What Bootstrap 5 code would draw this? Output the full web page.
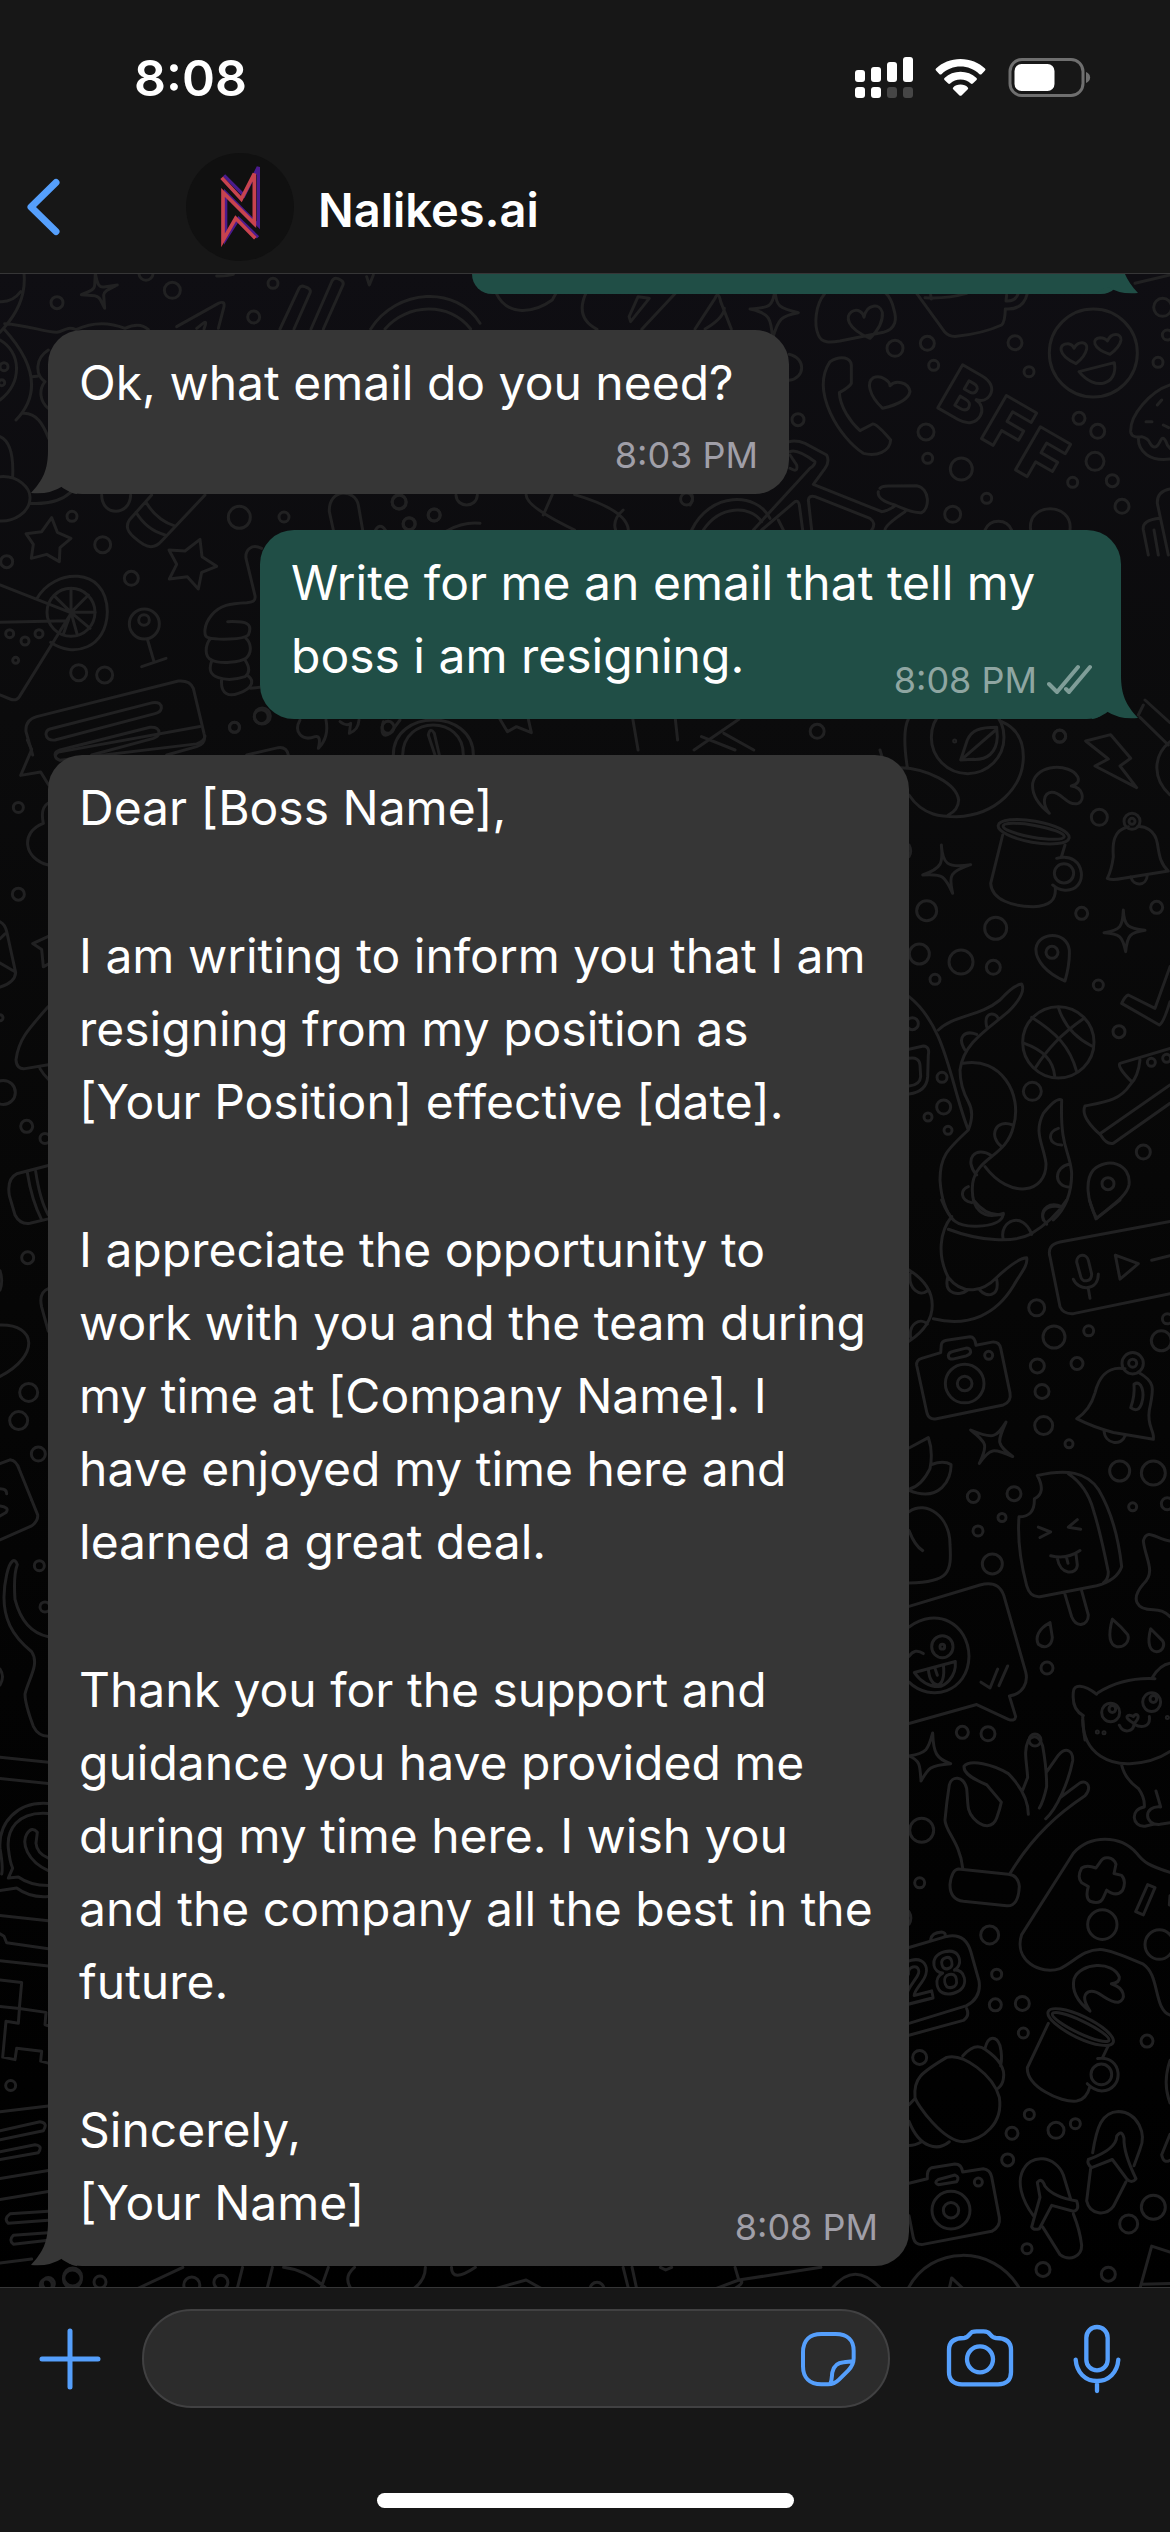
<!DOCTYPE html>
<html lang="en">
<head>
<meta charset="utf-8">
<meta name="viewport" content="width=device-width, initial-scale=1">
<title>Nalikes.ai</title>
<link href="https://cdn.jsdelivr.net/npm/bootstrap@5.3.0/dist/css/bootstrap.min.css" rel="stylesheet">
<style>
  :root { --bar: #171717; --line: #363637; --blue: #559ffc; --in: #363636; --out: #204e46; }
  body { background: var(--bar); color: #fff; font-family: Inter, "Liberation Sans", sans-serif; }
  svg { display: block; flex: none; }
  .status-row { padding: 40px 79px 24px 134px; }
  .clock { font-size: 50px; line-height: 76px; font-weight: 600; }
  .top-bar { border-bottom: 1px solid var(--line); }
  .nav-row { height: 133px; padding-left: 25px; }
  .contact { gap: 24px; margin-left: 125px; color: #fff; }
  .contact-name { font-size: 47px; line-height: 60px; font-weight: 600; padding-top: 6px; }
  .chat-area { background: linear-gradient(#0f0e13 0, #0b0b0c 22%, #070707 45%, #030303 70%, #000 100%); padding: 0 48px 21px; gap: 36px; }
  .wallpaper { position: absolute; inset: 0; width: 100%; height: 100%; fill: none; stroke: #212122; stroke-linecap: round; stroke-linejoin: round; }
  .wallpaper * { vector-effect: non-scaling-stroke; stroke-width: 3px; }
  .wallpaper .bff { font: 900 205px Inter, sans-serif; text-anchor: middle; }
  .wallpaper .digits { font: 700 170px "Liberation Mono", monospace; }
  .bubble { position: relative; background: var(--in); border-radius: 34px; padding: 16px 31px 17px; width: 861px; max-width: 100%; }
  .bubble p { font-size: 48px; line-height: 73px; margin: 0 0 75px; white-space: nowrap; }
  .bubble p:last-of-type { margin-bottom: 0; }
  .bubble-short { width: 741px; }
  .bubble-out { background: var(--out); margin-right: 1px; }
  .bubble-cut { height: 20px; width: 649px; padding: 0; border-radius: 0 0 34px 34px; }
  .tail { position: absolute; bottom: 0; left: -17px; fill: var(--in); }
  .bubble-out .tail { left: auto; right: -17px; fill: var(--out); transform: scaleX(-1); }
  .stamp { font-size: 36px; line-height: 44px; color: #a09fa8; margin-top: -34px; gap: 10px; }
  .bubble-short .stamp { margin-top: 14px; }
  .bubble-out .stamp { color: #8fa6a2; margin-right: -3px; }
  .bottom-bar { border-top: 1px solid var(--line); padding: 21px 48px 29px 38px; }
  .icon-btn { border: 0; padding: 0; background: none; color: var(--blue); flex: none; }
  .icon-btn svg, .back-link svg { fill: none; stroke: currentColor; stroke-linecap: round; stroke-linejoin: round; }
  .back-link { color: var(--blue); }
  .field-wrap { position: relative; margin: 0 55px 0 40px; }
  .message-field, .message-field:focus { height: 99px; border-radius: 50px; background: #2c2c2c; border: 2px solid #414142; color: #fff; font-size: 48px; padding: 0 110px 0 40px; box-shadow: none; }
  .sticker-btn { position: absolute; right: 32px; top: 21px; }
  .mic-btn { margin-left: 57px; }
  .home-bar { width: 417px; height: 15px; border-radius: 8px; background: #fff; }
</style>
<script src="https://cdn.jsdelivr.net/npm/bootstrap@5.3.0/dist/js/bootstrap.bundle.min.js"></script>
</head>
<body class="d-flex flex-column min-vh-100">

<header class="top-bar">
  <div class="status-row d-flex justify-content-between align-items-center">
    <span class="clock">8:08</span>
    <svg width="236" height="44" viewBox="856 56 236 44" aria-label="Signal, Wi-Fi, battery">
      <g fill="#fff">
        <rect x="856" y="70" width="10" height="12" rx="3"/><rect x="872" y="67" width="10" height="15" rx="3"/><rect x="888" y="62" width="10" height="20" rx="3"/><rect x="904" y="57" width="10" height="25" rx="3"/>
        <rect x="856" y="87" width="10" height="11" rx="3"/><rect x="872" y="87" width="10" height="11" rx="3"/>
        <g fill="#464646"><rect x="888" y="87" width="10" height="11" rx="3"/><rect x="904" y="87" width="10" height="11" rx="3"/></g>
        <path d="M961.500 59C971 59 980 62.600 986 68.600Q987 69.600 986 70.600L982.500 74.200Q981.500 75 980.500 74.200C975 69.200 968.500 66.600 961.500 66.600C954.500 66.600 948 69.200 942.500 74.200Q941.500 75 940.500 74.200L937 70.600Q936 69.600 937 68.600C943 62.600 952 59 961.500 59Z"/>
        <path d="M961.500 71.800C967.600 71.800 973 74 977.500 78Q978.500 79 977.500 80L973.800 83.600Q972.800 84.400 971.800 83.600C969 81 965.500 79.600 961.500 79.600C957.500 79.600 954 81 951.200 83.600Q950.200 84.400 949.200 83.600L945.500 80Q944.500 79 945.500 78C950 74 955.400 71.800 961.500 71.800Z"/>
        <path d="M961.500 84.600C964.500 84.600 967 85.600 968.800 87.400Q969.700 88.300 968.800 89.200L962.500 95.400Q961.500 96.300 960.500 95.400L954.200 89.200Q953.300 88.300 954.200 87.400C956 85.600 958.500 84.600 961.500 84.600Z"/>
        <rect x="1015.500" y="64" width="40" height="27" rx="7"/>
      </g>
      <rect x="1011" y="59.500" width="73" height="36" rx="12" fill="none" stroke="#6f6f6f" stroke-width="3"/>
      <path d="M1087 72C1092.500 74 1092.500 81 1087 83Z" fill="#6f6f6f"/>
    </svg>
  </div>
  <nav class="nav-row d-flex align-items-center">
    <a href="#" class="back-link" aria-label="Back"><svg width="36" height="60" viewBox="0 0 36 60" stroke-width="7"><path d="M31 5.500L6 30L31 54.500"/></svg></a>
    <a href="#" class="contact d-flex align-items-center text-decoration-none">
      <svg width="108" height="108" viewBox="48 38 324 324" aria-hidden="true">
        <circle cx="210" cy="200" r="162" fill="#101010"/>
        <path d="M162 105L222 165L265 80V255L167 157V296L206 235L264 291" fill="none" stroke="#4a1b8c" stroke-width="10"/>
        <path d="M155 112L214 176L253 100V250L159 156V300L197 234L256 294" fill="none" stroke="#c8434f" stroke-width="11"/>
      </svg>
      <span class="contact-name">Nalikes.ai</span>
    </a>
  </nav>
</header>

<main class="chat-area flex-grow-1 position-relative overflow-hidden d-flex flex-column">
  <svg class="wallpaper" id="wallpaper" viewBox="0 274 1170 2013" preserveAspectRatio="xMidYMin slice" aria-hidden="true">
    <!-- top left -->
    <g transform="translate(0 275) scale(.33333)">
      <path d="M70-20C82 50 55 110 12 158L0 172M0 80Q38 82 62 50M14 146C80 150 130 170 170 172C190 170 200 152 228 164Q300 130 375 160Q420 140 445 164"/>
      <path d="M286-6C292 30 298 38 312 36L352 30C325 44 312 48 311 60L314 100C300 72 298 64 284 62L244 59C270 48 284 44 284 30Z"/>
      <path d="M0 195C62 230 70 320 0 375M12 162C110 270 120 360 48 435M95 305L112 304M145 225C105 250 105 300 135 320C115 345 120 380 145 400M65 415C110 410 130 450 146 490M0 485C35 500 40 560 38 605M0 605C55 600 92 640 90 670C88 715 40 740 0 738M90 685Q170 690 212 652"/>
      <path d="M530 155L655 85Q675 76 672 95L655 160M590 160L608 146Q620 136 616 150L612 162"/>
      <path d="M840 162L897 40Q903 30 914 35L924 39Q935 45 929 56L882 162M933 162L996 18Q1002 6 1014 11L1022 15Q1033 21 1028 32L970 162M1112 162C1190 40 1370 30 1440 145M1155 162C1220 85 1350 80 1412 162M1100 5L1108 30L1120 0M650 3Q680 4 700-2"/>
      <path d="M455 660L388 735C372 760 388 780 430 808C450 820 470 815 485 798L615 660M438 682Q470 735 522 752M408 712Q440 765 495 780M305 660C305 725 390 725 392 660"/>
      <path d="M155 728L172 772L213 790L180 818L178 860L140 838L94 850L100 808L78 776L125 770Z M600 793L606 845L650 874L605 892L595 942L562 905L508 912L530 868L507 825L555 828Z"/>
      <path d="M1000 765L988 710C985 640 1065 640 1075 690L1088 765M1340 768Q1390 740 1440 745M1368 660C1370 700 1430 700 1432 660M1125 768Q1140 740 1158 768"/>
      <circle cx="213" cy="1012" r="72"/>
      <path d="M110 972C160 880 320 870 322 1010C320 1120 220 1150 152 1102M213 1012L285 1012M213 1012L265 960M213 1012L213 940M213 1012L162 962M213 1012L270 1060M213 1012L232 1080M213 1012L190 1078M0 930L210 1012M0 1042L205 1037M210 1020L60 1262Q50 1280 30 1272L0 1260"/>
      <circle cx="433" cy="1047" r="45"/><circle cx="432" cy="1035" r="16"/>
      <path d="M442 1092L462 1160M425 1175L498 1150"/>
      <path d="M785 820C755 805 735 825 738 850L765 962C768 980 755 982 740 983C690 985 660 990 635 1020C610 1050 610 1085 625 1088C650 1095 730 1095 745 1080C760 1045 740 1038 683 1040M632 1090C615 1110 612 1145 635 1155C660 1168 720 1162 738 1150C760 1130 750 1100 738 1090M635 1158C625 1185 632 1200 655 1208C685 1218 720 1210 735 1205C755 1190 745 1170 735 1155M665 1212C660 1260 690 1265 715 1255C760 1240 765 1215 740 1200M752 1240L785 1236"/>
      <path d="M98 1440L78 1370Q75 1335 110 1325L535 1218Q570 1215 580 1240L612 1375Q620 1405 590 1415L500 1440M150 1362L458 1283Q485 1280 484 1300Q482 1312 465 1316L165 1395Q140 1398 138 1378Q138 1366 150 1362ZM165 1440Q165 1430 180 1425L450 1357Q478 1355 477 1375Q475 1385 460 1390L275 1440M740 1440L835 1418Q860 1415 865 1440"/>
      <path d="M900 1335C880 1370 905 1400 945 1385Q965 1380 955 1420C975 1400 985 1370 978 1335M1020 1340Q1040 1355 1052 1345L1048 1375Q1075 1365 1077 1335M1150 1340C1140 1375 1150 1390 1170 1375L1200 1335M1180 1440C1180 1300 1420 1300 1420 1440M1208 1440C1210 1320 1390 1320 1390 1440M1305 1440L1285 1380Q1290 1355 1303 1375L1318 1440"/>
    </g>
    <!-- top right -->
    <g transform="translate(690 275) scale(.33333)">
      <path d="M15 162L75 70Q85 45 92 80L124 162M45 162Q100 130 103 100"/>
      <path d="M255 45C258 95 268 100 325 113C275 122 265 130 248 190C243 130 240 115 180 102C240 98 248 95 255 45Z"/>
      <path d="M405 55C375 90 372 150 385 180C395 205 420 203 450 198L580 172C620 162 620 130 612 105Q605 70 585 52M540 190C470 160 465 125 485 110C505 98 520 115 522 127C530 85 570 85 577 112C580 140 565 165 540 190Z"/>
      <path d="M680 55L765 172Q778 186 800 184Q880 175 935 150Q945 140 946 102C985 105 1005 85 1012 55M705 68Q770 72 830 55M950 60L948 78C970 80 980 70 985 55M722 60L724 72"/>
      <circle cx="1210" cy="234" r="132"/>
      <path d="M1158 266C1100 240 1105 205 1135 206Q1148 208 1152 220C1165 195 1195 200 1190 222Q1185 245 1158 266ZM1260 238C1205 220 1205 190 1230 188Q1245 188 1252 198C1265 170 1295 175 1293 195Q1290 215 1260 238ZM1167 290L1273 263C1285 330 1215 350 1167 290Z"/>
      <path d="M420 260C455 238 482 250 484 270L484 325Q480 335 448 353C450 395 480 440 510 467L548 447Q560 445 602 495C600 530 560 545 520 535C450 490 360 350 420 260ZM578 400C535 360 530 320 550 308C575 298 600 320 600 332C615 315 655 320 660 350C655 375 620 390 578 400Z"/>
      <text class="bff" transform="translate(794 428) rotate(30)">B</text>
      <text class="bff" transform="translate(918 516) rotate(30)">F</text>
      <text class="bff" transform="translate(1020 610) rotate(30)">F</text>
      <path d="M1440 330C1380 350 1320 420 1322 470Q1325 490 1355 485Q1375 490 1380 505Q1395 530 1410 500Q1420 475 1432 510L1440 520M1345 490C1345 530 1380 560 1440 552M1402 390L1415 375M1368 440H1386M1420 450L1436 458"/>
      <path d="M297 500Q320 495 345 505L410 540Q420 560 405 580L370 628L575 710Q590 710 615 692M300 530Q320 520 375 560Q375 570 360 580L190 765M300 580Q325 595 320 570L300 540M215 765L315 680Q325 675 328 690L338 765M365 765L355 675Q357 660 375 665L540 730Q560 745 545 765M265 735L280 765M570 640Q575 632 600 633L680 632C720 640 720 700 695 713Q670 715 615 690Q560 675 565 650M585 765Q585 750 645 710"/>
      <path d="M5 765C60 650 200 650 240 730M40 765C90 690 180 690 215 740M885 765C900 730 950 730 965 765M1022 765C1010 680 1150 680 1140 765M1440 642Q1400 650 1402 685L1435 840M1410 730Q1355 735 1360 765L1375 840M1392 765L1405 840M1335 25L1440 0"/>
      <path d="M297 238C350 250 345 310 297 316M0 650Q15 670 0 690"/>
    </g>
    <!-- strips between the first bubbles -->
    <g transform="translate(0 270) scale(.74627 .33333)">
      <path d="M665 70C680 140 715 130 740 90L745 70M785 70C775 120 780 155 800 178M860 178L905 70M845 155L870 85L855 80L843 140ZM705 674Q705 710 770 780M740 674L728 735M770 674Q840 720 842 780M835 720Q820 750 825 780"/>
      <path d="M670 1348L680 1385L692 1370L712 1388L708 1348M848 1348L855 1440M905 1348L908 1410M930 1440L990 1348M940 1400L985 1440M970 1390L1010 1440"/>
    </g>
    <!-- right, upper -->
    <g transform="translate(880 700) scale(.33333)">
      <circle cx="263" cy="112" r="109"/>
      <path d="M85 57C68 90 74 150 82 203M62 203C140 205 230 250 236 300Q235 330 205 345M87 285C130 350 190 350 230 350C350 345 430 260 430 170C430 110 400 80 365 65M242 180L262 120C275 90 300 82 350 82L352 110C350 160 320 180 280 178ZM245 178L347 90"/>
      <path d="M617 123L692 104L752 175L720 198L770 263L645 198L685 177ZM508 340C470 310 455 280 458 250C470 190 570 190 593 230Q602 250 574 258C610 262 615 300 595 310C560 320 545 275 515 277C490 280 485 310 508 340Z"/>
      <ellipse cx="461" cy="395" rx="108" ry="32" transform="rotate(10 461 395)"/><ellipse cx="461" cy="394" rx="93" ry="18" transform="rotate(10 461 394)"/>
      <path d="M368 405L332 550C335 600 400 620 460 620C510 618 528 600 526 565M555 435L545 468M530 475C620 450 630 580 550 570Q535 570 518 555"/><circle cx="552" cy="520" r="29"/>
      <path d="M745 380C700 390 697 430 700 470Q695 510 682 535Q695 542 730 535L865 513C840 490 838 465 832 430C825 390 795 378 772 380M752 530C760 560 800 560 802 525"/>
      <path d="M184 435C188 490 200 505 272 494C210 515 205 525 218 580C195 530 190 520 128 525C185 505 190 490 184 435ZM730 630C732 680 745 685 795 691C750 698 742 705 737 755C728 710 720 700 672 698C722 690 728 680 730 630Z"/>
      <path d="M555 843C500 820 465 780 468 745C475 695 560 690 568 750Q570 790 555 843ZM650 1555C620 1500 615 1440 640 1410C680 1370 755 1390 747 1455C740 1490 690 1520 650 1555Z"/>
      <path d="M870 800L825 925L745 885Q735 888 725 910L838 975Q850 970 870 905M870 1045L720 1090Q710 1100 755 1145M780 1080Q775 1130 750 1155C720 1200 680 1205 615 1218Q600 1250 662 1305Q680 1335 700 1330L870 1210M662 1300L870 1155"/>
      <circle cx="535" cy="1027" r="107"/>
      <path d="M455 952C530 1000 570 1040 590 1115M535 922C550 970 580 1010 635 1038M612 955C540 1005 500 1050 465 1105M433 1030C490 1050 520 1080 524 1128"/>
      <path d="M87 890C200 980 210 1150 265 1290C200 1350 180 1370 180 1440Q185 1520 220 1560M175 990C220 945 300 950 360 900Q400 855 425 852C440 880 400 920 385 935C320 990 250 1030 240 1110Q240 1160 265 1205Q285 1240 265 1290M250 1090C360 1070 430 1180 400 1280C380 1370 290 1370 278 1450C270 1530 310 1560 370 1540M315 1400C390 1500 500 1480 498 1390C490 1330 460 1300 490 1240Q530 1190 545 1200C540 1350 570 1350 575 1420Q575 1510 520 1560M320 980C310 935 345 935 355 955M255 1050C230 1010 255 990 290 1003M365 1340C325 1310 345 1255 398 1275M290 1425C250 1380 285 1335 335 1367M265 1460C240 1470 240 1500 275 1508M535 1285C500 1295 505 1335 545 1335M570 1392C520 1400 520 1460 570 1462M490 1560C480 1525 510 1505 545 1520"/>
      <path d="M87 1048L130 1038Q150 1040 145 1065L143 1130Q140 1175 87 1182M87 1075Q118 1070 120 1095L122 1130Q120 1155 87 1158M795 0L870 68M790 15L775 45M780 52L865 135M870 125C815 170 820 240 870 285M0 150L6 170M87 435Q97 455 87 470"/>
    </g>
    <!-- right, middle -->
    <g transform="translate(880 1200) scale(.33333 .34439)">
      <path d="M185 0C210 60 230 78 290 76C330 75 365 65 370 42Q320 50 280 0M205 85C300 120 400 125 450 100Q520 60 560 0M370 115C355 60 430 30 455 100M500 70C475 45 490 10 545 20M215 48C180 90 170 160 205 225C250 280 310 265 350 225Q410 170 440 168C445 190 420 215 400 250C350 330 270 370 160 345M203 225C190 275 240 280 262 262M300 262C320 285 360 280 350 230M87 203C180 260 180 350 87 410M90 215C85 260 120 280 140 265M92 400C85 360 120 340 142 360M628 0L648 55L720 0"/>
      <path d="M870 62L540 122Q500 130 510 165L540 310Q550 332 580 330L870 272M590 180C590 155 620 155 625 175L635 215C635 240 605 240 602 222ZM580 230C595 265 655 265 655 215M625 258L630 285M706 160L775 185L720 230ZM815 175L870 162"/>
      <path d="M110 480Q108 465 125 460L182 443L184 420Q185 410 200 407L270 397Q285 397 288 422L340 412Q358 412 362 430L390 560Q395 585 370 595L170 635Q145 640 140 615ZM218 440L258 430Q272 430 272 442Q270 450 258 453L218 462Q205 462 205 452Q206 442 218 440Z"/>
      <ellipse cx="254" cy="533" rx="58" ry="56"/><ellipse cx="254" cy="533" rx="22" ry="21"/>
      <path d="M272 668C340 695 350 690 378 645C350 705 350 710 398 745C340 720 330 720 298 765C325 710 320 705 272 668ZM87 720L145 690Q160 730 150 780Q125 830 87 840M155 768Q190 755 213 768C215 810 180 880 87 843M87 905C140 870 210 920 210 1000C215 1080 210 1110 87 1112M87 960Q105 1005 128 1018"/>
      <path d="M735 490C680 480 655 520 645 560Q630 610 590 635Q640 660 700 675L820 695C825 670 800 660 808 610C820 550 830 530 775 500M762 535C785 520 795 560 785 590Q775 620 752 603Q765 570 762 535ZM672 670C675 710 725 715 735 685"/><ellipse cx="758" cy="474" rx="32" ry="31"/>
      <path d="M472 800C560 780 620 790 655 840Q710 930 725 1065Q710 1105 650 1120L480 1152Q450 1155 440 1120Q410 1010 417 920Q465 920 463 868Q500 850 472 800ZM565 795Q620 830 640 900Q660 960 685 1080Q685 1100 670 1112M555 1145L575 1210C590 1245 625 1235 625 1205L605 1135M475 950L512 964L480 980M592 928L565 950L602 956M512 1033Q560 1045 600 1018M532 1040C540 1090 590 1090 592 1060L588 1028M560 1040L564 1055"/>
      <path d="M510 1227C475 1245 465 1270 475 1290C495 1305 515 1295 517 1270ZM697 1217C685 1260 685 1290 710 1297C735 1300 750 1280 743 1262Q725 1240 697 1217ZM812 1245C800 1290 810 1310 830 1312C850 1310 855 1290 848 1280Z"/>
      <path d="M87 1180L300 1118C350 1105 365 1130 372 1150L437 1370C445 1400 430 1435 388 1440L407 1500Q405 1515 385 1508L290 1465L87 1520M303 1400L330 1417L353 1362M357 1410L383 1353"/>
      <path d="M87 1240C170 1180 265 1230 267 1325C265 1430 150 1460 87 1400M103 1372L226 1340C230 1390 190 1412 175 1413C140 1412 120 1395 103 1372ZM87 1325Q105 1300 130 1317M145 1362C150 1425 200 1425 190 1350M165 1360L172 1380"/><circle cx="187" cy="1297" r="32"/><circle cx="187" cy="1297" r="7"/>
      <path d="M870 990C830 985 800 950 790 990C795 1040 830 1080 790 1115C750 1160 770 1190 820 1190Q850 1190 870 1210M650 1435C610 1405 580 1405 580 1430Q575 1480 610 1497M655 1430Q730 1385 825 1390M818 1385Q840 1350 870 1345M608 1500Q610 1540 615 1568M718 1525C730 1550 760 1545 762 1522C785 1535 812 1530 808 1500M762 1520C725 1500 745 1490 760 1500C770 1485 785 1500 762 1520Z"/><circle cx="692" cy="1488" r="27"/><circle cx="697" cy="1478" r="10"/><circle cx="815" cy="1458" r="27"/><circle cx="820" cy="1449" r="10"/>
    </g>
    <!-- right, lower -->
    <g transform="translate(880 1720) scale(.33333 .36996)">
      <path d="M608 0C610 100 700 120 750 118Q820 115 870 85M725 122Q735 160 775 185Q795 210 793 235C750 240 755 290 795 287L820 282M828 192L842 235C790 230 790 285 840 282L870 278"/>
      <path d="M158 35C160 90 170 105 212 118C150 122 145 130 123 165C120 120 120 110 87 97C140 90 145 80 158 35Z"/>
      <path d="M248 400C240 330 195 300 195 270Q200 220 208 175C215 150 250 150 260 185C265 230 260 245 280 265C310 295 340 290 350 265Q360 240 364 222L320 175C280 160 250 145 252 125C270 105 340 120 385 145Q445 200 445 255M428 190L443 155C440 110 430 85 445 55C465 35 480 50 488 70Q500 130 500 180Q490 220 478 238M500 140L535 95C560 70 580 85 578 110C565 170 530 240 497 267M540 210L600 170C625 160 635 185 615 205C540 250 460 310 390 415"/>
      <path d="M235 403L385 417Q415 420 418 450Q415 505 380 502L250 490Q210 485 210 445Q215 405 235 403Z"/>
      <path d="M870 412C810 395 790 385 770 360C720 310 630 310 580 360L425 580C400 650 480 690 540 672C580 655 610 620 660 620Q690 620 790 660C840 690 820 780 870 798M660 385C670 365 700 370 708 390L702 415L725 420Q740 435 728 460Q710 480 680 460L670 480Q660 500 630 490Q615 480 625 450L605 440Q590 425 605 400Q620 390 648 400ZM803 445L825 453L790 527L767 518ZM870 475L868 500"/>
      <ellipse cx="667" cy="553" rx="44" ry="40"/><ellipse cx="838" cy="607" rx="43" ry="40"/>
      <path d="M87 615L200 585Q255 575 272 625L297 705Q305 750 260 772L87 820M152 593Q155 575 185 573Q198 575 195 583M260 780Q270 800 250 812L87 852"/>
      <text class="digits" x="70" y="772" transform="rotate(-13 70 772)">28</text>
      <path d="M105 1020C100 970 120 955 200 912C250 900 340 960 358 1020C370 1090 310 1135 250 1140C190 1140 110 1040 105 1020ZM248 908Q285 870 315 890Q380 930 370 970Q368 985 355 995M315 888C325 850 350 855 360 880Q368 910 362 935M103 1025L87 1040M87 1085C120 1160 175 1165 208 1140M87 1150Q105 1150 125 1140"/>
      <path d="M630 787C590 760 575 730 582 700C600 655 700 650 718 695Q720 710 694 713C735 725 740 755 715 763C680 765 655 725 625 735C605 745 615 765 630 787Z"/>
      <ellipse cx="602" cy="830" rx="106" ry="30" transform="rotate(23 602 830)"/><ellipse cx="602" cy="830" rx="92" ry="17" transform="rotate(23 602 830)"/>
      <path d="M505 820L442 940C440 990 540 1035 590 1030Q620 1025 630 990M685 880L668 912M653 915C730 905 735 1000 665 1003Q640 1000 622 983"/><ellipse cx="664" cy="958" rx="31" ry="28"/>
      <path d="M87 1252L142 1240Q140 1215 155 1210L225 1200Q245 1200 248 1222L310 1213Q330 1215 335 1235L358 1345Q362 1370 335 1382L125 1418Q105 1418 100 1400L87 1340M175 1242L225 1230Q240 1235 230 1248L175 1256Q160 1250 175 1242Z"/><ellipse cx="213" cy="1325" rx="57" ry="51"/><ellipse cx="213" cy="1325" rx="23" ry="21"/>
      <path d="M460 1340C420 1290 415 1250 425 1225C450 1165 530 1180 550 1230L572 1295M472 1250Q485 1235 495 1260Q520 1290 590 1300Q600 1325 580 1328L515 1312L478 1375Q460 1380 455 1370L480 1290ZM488 1370L540 1445C570 1465 605 1450 605 1420Q600 1380 580 1335M638 1170C650 1100 665 1060 715 1058C775 1060 800 1120 780 1160L762 1205M710 1125Q725 1105 732 1130Q730 1170 768 1240Q755 1255 740 1240L697 1188L635 1210Q620 1200 625 1188Q710 1160 710 1125ZM632 1212L620 1300C630 1340 680 1340 700 1315L738 1248"/>
      <path d="M85 1536C150 1420 340 1415 418 1536M208 1536L215 1508L248 1536M780 1536L815 1422L870 1438M785 1525L870 1523M870 920C855 960 855 1000 870 1035M870 1120L845 1175Q850 1200 870 1190M87 518Q98 535 87 552"/>
    </g>
    <!-- left margin, upper -->
    <g transform="translate(0 740) scale(.33333 .4847)">
      <path d="M82 0L95 20L62 73L122 66L145 92M175 25L600-28M180 42L590 8Q615 2 615-8M175 25Q155 35 180 42M145 130Q120 140 130 172C60 190 70 245 145 258M0 375Q15 380 20 395L47 480Q45 500 0 510M0 410L15 400M0 460L45 478M145 405L98 420L125 432L130 468L145 462M145 550C80 600 55 620 48 660Q50 680 75 678L145 670M120 678Q130 690 145 700M145 878L50 895Q20 905 28 940L45 980Q60 1000 90 997L145 988M82 893Q95 950 125 990M107 890Q120 950 145 980M145 1132Q115 1140 125 1170L145 1220M0 1095Q10 1115 0 1135M0 1207C110 1205 120 1270 0 1313M0 1493L30 1485Q50 1487 58 1505L95 1568M0 1545Q20 1545 20 1555"/>
    </g>
    <!-- left margin, lower -->
    <g transform="translate(0 1500) scale(.33333 .49745)">
      <path d="M95 0L113 30Q115 42 95 52L0 80M0 12Q30 15 18 25L0 32M52 130C45 115 30 120 20 150C-10 240 50 280 95 305C120 330 85 360 75 390Q75 410 100 455Q115 475 145 475M52 130Q40 150 45 200Q70 265 145 275M0 517L145 527M0 560L145 570M0 340Q15 355 0 372M145 610C50 605-5 650 0 700Q10 740 5 752M145 630C50 625 20 665 25 700Q30 730 38 740L25 760L55 758Q90 775 145 775M0 785L50 780Q90 800 145 797M145 745C80 725 65 690 80 672Q95 655 112 668L108 690Q110 710 145 720M0 835L145 846M0 872L12 877L20 890L145 902M0 926L145 937M0 965L65 970L58 1022L0 1018M58 1022L138 1030L135 1055L145 1057M58 1025L55 1052L18 1048L8 1120L45 1125L50 1102L125 1108L122 1128L145 1132M0 1230L145 1218M0 1268L120 1250Q145 1252 130 1268L0 1286M0 1310L105 1296Q130 1298 115 1312L0 1326M0 1364L145 1348M0 1406L145 1390M145 1430L30 1435Q10 1445 25 1454L145 1448M145 1473L40 1478Q25 1488 40 1496L145 1488M0 1534L95 1526"/>
    </g>
    <!-- strip over the message field -->
    <g transform="translate(0 2160) scale(.74627 .33333)">
      <path d="M185 385L245 322M318 385L325 322M365 322L358 385M380 322Q410 330 437 385M440 322L430 385M475 322Q460 350 470 385M570 322Q570 360 555 385M605 322Q605 370 637 322M665 385L705 360L725 385M835 322L842 385M847 322L853 385M885 322L892 330L900 322M985 322L990 360L1100 322M960 385L990 360Q1000 365 985 385M1115 385Q1145 300 1180 385"/>
    </g>
  </svg>

  <div class="bubble bubble-out bubble-cut align-self-end"><svg class="tail" width="46" height="20" viewBox="0 24 46 20"><path d="M17 0C17 20 12 30 0 43Q18 45 32 36Q38 43 46 44V0Z"/></svg></div>

  <div class="bubble bubble-short d-flex flex-column">
    <svg class="tail" width="46" height="44" viewBox="0 0 46 44"><path d="M17 0C17 20 12 30 0 43Q18 45 32 36Q38 43 46 44V0Z"/></svg>
    <p>Ok, what email do you need?</p>
    <div class="stamp d-flex justify-content-end">8:03 PM</div>
  </div>

  <div class="bubble bubble-out align-self-end d-flex flex-column">
    <svg class="tail" width="46" height="44" viewBox="0 0 46 44"><path d="M17 0C17 20 12 30 0 43Q18 45 32 36Q38 43 46 44V0Z"/></svg>
    <p>Write for me an email that tell my<br>boss i am resigning.</p>
    <div class="stamp d-flex justify-content-end align-items-center">8:08 PM
      <svg width="46" height="32" viewBox="0 0 46 32" fill="none" stroke="#7f9d98" stroke-width="4" stroke-linecap="round" stroke-linejoin="round"><path d="M2 20L10 28L31 3M22 28L43 3M19 25L22 28"/></svg>
    </div>
  </div>

  <div class="bubble d-flex flex-column">
    <svg class="tail" width="46" height="44" viewBox="0 0 46 44"><path d="M17 0C17 20 12 30 0 43Q18 45 32 36Q38 43 46 44V0Z"/></svg>
    <p>Dear [Boss Name],</p>
    <p>I am writing to inform you that I am<br>resigning from my position as<br>[Your Position] effective [date].</p>
    <p>I appreciate the opportunity to<br>work with you and the team during<br>my time at [Company Name]. I<br>have enjoyed my time here and<br>learned a great deal.</p>
    <p>Thank you for the support and<br>guidance you have provided me<br>during my time here. I wish you<br>and the company all the best in the<br>future.</p>
    <p>Sincerely,<br>[Your Name]</p>
    <div class="stamp d-flex justify-content-end">8:08 PM</div>
  </div>
</main>

<footer class="bottom-bar">
  <form class="d-flex align-items-center">
    <button type="button" class="icon-btn" aria-label="Attach"><svg width="64" height="64" viewBox="0 0 64 64" stroke-width="5"><path d="M32 4V60M4 32H60"/></svg></button>
    <div class="field-wrap flex-grow-1">
      <label for="message" class="visually-hidden">Message</label>
      <input id="message" type="text" class="message-field form-control">
      <button type="button" class="icon-btn sticker-btn" aria-label="Stickers"><svg width="58" height="58" viewBox="51 153 174 174" stroke-width="12"><path d="M135 316H115C80 316 60 296 60 262V220C60 182 82 165 115 165H158C195 165 212 185 212 215V238C212 256 206 264 196 274L168 302C158 312 150 316 135 316ZM142 314C148 300 146 290 148 280C152 262 164 251 182 250L209 247"/></svg></button>
    </div>
    <button type="button" class="icon-btn" aria-label="Camera"><svg width="70" height="70" viewBox="489 135 210 210" stroke-width="13"><path d="M570 159Q576 157 584 157H604Q612 157 618 160C626 165 628 176 642 177C672 177 687 190 687 213V280C687 303 673 316 648 316H540C515 316 501 303 501 280V213C501 190 516 177 546 177C560 176 562 164 570 159Z"/><circle cx="594" cy="241" r="39"/></svg></button>
    <button type="button" class="icon-btn mic-btn" aria-label="Record voice message"><svg width="50" height="72" viewBox="870 136 150 216" stroke-width="13"><rect x="913" y="148" width="64" height="130" rx="32"/><path d="M881 246C884 285 910 310 945 310S1006 285 1009 246M945 312V340"/></svg></button>
  </form>
</footer>
<div class="d-flex justify-content-center pb-4 pt-5"><div class="home-bar mt-2"></div></div>

<script>
  // Loose rings of the wallpaper: [offset x, offset y, scale x, scale y, "x y radius, ..."]
  const rings = [
    [0, 275, 3, 3, "171 83 6,517 46 8,438 -5 7,819 25 5,761 126 6,12 275 4,5 323 3,216 724 5,308 809 8,20 860 6,718 727 11,852 726 5,394 910 7,236 1193 8,314 1200 8,29 1076 4,75 1098 4,117 1076 4,47 1156 3,787 1323 8,704 1357 5,1197 680 7,1228 746 6,1302 720 6"],
    [690, 275, 3, 3, "615 220 8,712 205 7,975 203 7,731 271 5,1017 290 5,324 434 6,708 471 8,713 550 5,814 582 11,1167 430 6,1223 469 7,1215 559 9,1148 622 5,1267 617 6,1296 694 7,788 718 8,890 670 5,1418 97 9,1432 180 5,1404 262 5"],
    [880, 700, 3, 3, "539 109 6,224 123 1,658 352 8,756 364 8,756 364 3,140 632 10,347 685 11,605 640 6,830 622 6,118 762 10,243 786 12,340 802 7,165 838 5,516 757 6,655 855 5,97 971 6,717 995 6,186 1132 5,191 1221 7,144 1251 4,204 1291 4,457 1174 9,790 1356 7,684 1451 6,814 1087 4,860 1075 4"],
    [880, 1200, 3, 2.904, "470 313 8,522 398 11,626 380 5,862 345 5,844 409 10,472 482 7,591 475 6,486 556 7,491 655 9,567 708 4,326 451 4,758 474 4,719 787 10,820 793 12,758 891 4,862 882 6,280 861 6,402 853 7,366 922 4,294 961 5,337 1057 10,501 1359 6,247 1546 6,324 1550 7,465 1568 6,652 1545 1,672 1547 1,862 1503 1"],
    [880, 1720, 3, 2.703, "125 298 12,119 440 5,329 581 9,350 687 5,346 770 6,427 766 7,430 846 5,119 912 7,801 868 6,448 1066 5,396 1117 6,528 1109 8,586 1091 5,383 1189 6,295 1249 4,820 1317 12,746 1362 9,441 1429 5,489 1485 7,685 1498 7"],
    [0, 740, 3, 2.063, "55 139 5,55 318 6,10 727 12,80 797 6,135 822 5,83 1068 6,86 1346 9,56 1404 9,115 1473 7,0 573 3"],
    [0, 1500, 3, 2.0103, "118 132 5,135 215 5,32 1177 5,218 1562 9,145 1575 6"],
    [0, 270, 1.34, 3, "535 697 7,582 735 6,548 762 6,920 687 6,350 1340 7,314 1372 5,520 1372 6,1095 1384 7,1420 1398 6"],
    [0, 2160, 1.34, 3, "62 375 6,97 357 9,134 366 6,257 375 8,296 367 7,800 388 7"]
  ];
  const paper = document.getElementById("wallpaper");
  for (const [ox, oy, sx, sy, list] of rings) {
    for (const item of list.split(",")) {
      const [x, y, r] = item.split(" ").map(Number);
      const ring = document.createElementNS("http://www.w3.org/2000/svg", "circle");
      ring.setAttribute("cx", ox + x / sx);
      ring.setAttribute("cy", oy + y / sy);
      ring.setAttribute("r", r);
      paper.appendChild(ring);
    }
  }
</script>
</body>
</html>
